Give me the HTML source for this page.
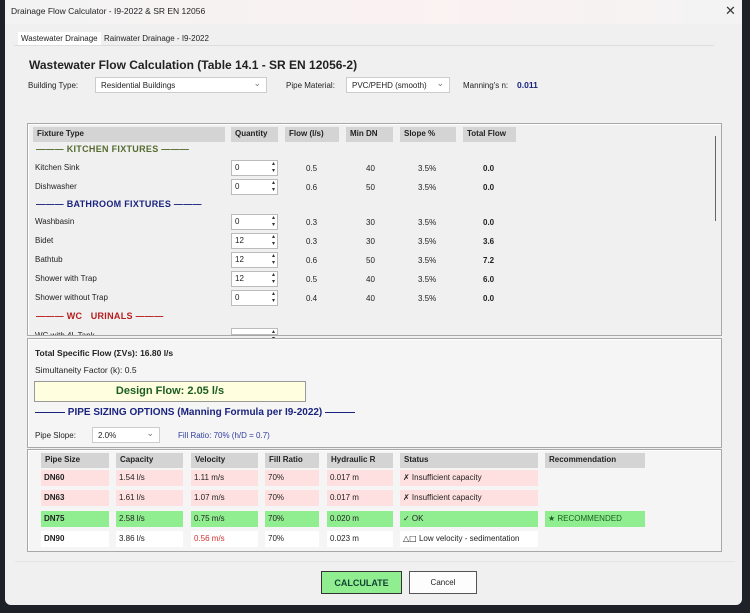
<!DOCTYPE html>
<html><head><meta charset="utf-8"><style>
*{box-sizing:border-box;margin:0;padding:0}
body{width:750px;height:613px;background:#1e2228;position:relative;overflow:hidden;font-family:"Liberation Sans",sans-serif;font-size:8.5px;color:#222}
.a{position:absolute;white-space:nowrap}
#dlg{position:absolute;left:5px;top:0;width:737px;height:605px;background:#f0f0f0;border-radius:0 0 6px 6px;overflow:hidden}
.title{left:0;top:0;width:737px;height:24px;background:linear-gradient(90deg,#f3f3f3,#fbf2f2 60%,#f3f3f3)}
.panel{position:absolute;border:1px solid #a8a8a8;box-shadow:inset 1px 1px 0 #fff}
.hc{position:absolute;background:#d4d4d4;font-weight:bold;height:15px;padding:2px 4px;font-size:8px}
.spin{position:absolute;width:47px;height:16px;background:#fff;border:1px solid #bbb;font-size:8px;padding:2px 3px}
.spin:after{content:"▴\A▾";white-space:pre;position:absolute;right:2px;top:0;font-size:6px;line-height:7px;color:#333}
.combo{position:absolute;background:#fff;border:1px solid #ccc;height:16px;padding:3px 5px;font-size:8px}
.combo:after{content:"⌄";position:absolute;right:5px;top:0;color:#777;font-size:9px}
.sec{position:absolute;font-weight:bold;font-size:9px;letter-spacing:.3px}
.c{position:absolute;height:16px;padding:3px 3px;font-size:8px}
.pk{background:#ffe0e0}.gr{background:#90ee90}.wh{background:#fff}
</style></head><body>
<div id="dlg">
<div class="a title"></div>
<div class="a" style="left:6px;top:6px;font-size:8.5px">Drainage Flow Calculator - I9-2022 &amp; SR EN 12056</div>
<div class="a" style="left:720px;top:3px;font-size:13px;color:#333">✕</div>
<div class="a" style="left:13px;top:32px;height:14px;background:#fff;padding:2px 3px;font-size:8px">Wastewater Drainage</div>
<div class="a" style="left:99px;top:34px;font-size:8px">Rainwater Drainage - I9-2022</div>
<div class="a" style="left:9px;top:45px;width:700px;border-top:1px solid #ddd"></div>
<div class="a" style="left:24px;top:58px;font-weight:bold;font-size:12px">Wastewater Flow Calculation (Table 14.1 - SR EN 12056-2)</div>
<div class="a" style="left:23px;top:81px;font-size:8px">Building Type:</div>
<div class="combo" style="left:90px;top:77px;width:172px">Residential Buildings</div>
<div class="a" style="left:281px;top:81px;font-size:8px">Pipe Material:</div>
<div class="combo" style="left:341px;top:77px;width:104px">PVC/PEHD (smooth)</div>
<div class="a" style="left:458px;top:81px;font-size:8px">Manning's n:</div>
<div class="a" style="left:512px;top:80px;font-weight:bold;color:#1a237e;font-size:8.5px">0.011</div>

<div class="panel" style="left:22px;top:123px;width:695px;height:213px;overflow:hidden">
 <div class="hc" style="left:5px;top:3px;width:192px">Fixture Type</div>
 <div class="hc" style="left:203px;top:3px;width:47px">Quantity</div>
 <div class="hc" style="left:257px;top:3px;width:54px">Flow (l/s)</div>
 <div class="hc" style="left:318px;top:3px;width:47px">Min DN</div>
 <div class="hc" style="left:372px;top:3px;width:56px">Slope %</div>
 <div class="hc" style="left:435px;top:3px;width:53px">Total Flow</div>
 <div class="a" style="left:687px;top:12px;width:1px;height:85px;background:#666"></div>
 <div class="sec" style="left:8px;top:20px;color:#556b2f">——— KITCHEN FIXTURES ———</div>
 <div class="sec" style="left:8px;top:75px;color:#1a237e">——— BATHROOM FIXTURES ———</div>
 <div class="sec" style="left:8px;top:187px;color:#b71c1c">——— WC &nbsp; URINALS ———</div>
</div>
<div id="rows"></div>

<div class="panel" style="left:22px;top:338px;width:695px;height:110px;background:#f5f5f5">
 <div class="a" style="left:7px;top:9px;font-weight:bold;font-size:8.5px">Total Specific Flow (ΣVs): 16.80 l/s</div>
 <div class="a" style="left:7px;top:26px;font-size:8.5px">Simultaneity Factor (k): 0.5</div>
 <div class="a" style="left:6px;top:42px;width:272px;height:21px;background:#ffffe0;border:1px solid #999;text-align:center;font-weight:bold;color:#1b5e20;font-size:11px;padding-top:3px">Design Flow: 2.05 l/s</div>
 <div class="sec" style="left:7px;top:68px;color:#1a237e;font-size:10px;letter-spacing:0">——— PIPE SIZING OPTIONS (Manning Formula per I9-2022) ———</div>
 <div class="a" style="left:7px;top:92px;font-size:8px">Pipe Slope:</div>
 <div class="combo" style="left:64px;top:88px;width:68px">2.0%</div>
 <div class="a" style="left:150px;top:92px;font-size:8px;color:#303f9f">Fill Ratio: 70% (h/D = 0.7)</div>
</div>

<div class="panel" style="left:22px;top:449px;width:695px;height:103px;background:#f5f5f5;overflow:hidden">
 <div class="hc" style="left:13px;top:3px;width:68px">Pipe Size</div>
 <div class="hc" style="left:88px;top:3px;width:67px">Capacity</div>
 <div class="hc" style="left:163px;top:3px;width:67px">Velocity</div>
 <div class="hc" style="left:237px;top:3px;width:54px">Fill Ratio</div>
 <div class="hc" style="left:299px;top:3px;width:66px">Hydraulic R</div>
 <div class="hc" style="left:372px;top:3px;width:138px">Status</div>
 <div class="hc" style="left:517px;top:3px;width:100px">Recommendation</div>
 <div id="res"></div>
</div>
<div class="a" style="left:10px;top:561px;width:720px;border-top:1px solid #e4e4e4"></div>
<div class="a" style="left:316px;top:571px;width:81px;height:23px;background:#90ee90;border:1px solid #333;text-align:center;font-weight:bold;font-size:9px;padding-top:6px;color:#143">CALCULATE</div>
<div class="a" style="left:404px;top:571px;width:68px;height:23px;background:#fdfdfd;border:1px solid #555;text-align:center;font-size:8px;padding-top:6px">Cancel</div>
</div>
<script>
var r=[["Kitchen Sink",168,"0","0.5","40","0.0"],["Dishwasher",187,"0","0.6","50","0.0"],["Washbasin",222,"0","0.3","30","0.0"],["Bidet",241,"12","0.3","30","3.6"],["Bathtub",260,"12","0.6","50","7.2"],["Shower with Trap",279,"12","0.5","40","6.0"],["Shower without Trap",298,"0","0.4","40","0.0"]];
var h="";r.forEach(function(x){var y=x[1];h+='<div class="a" style="left:30px;top:'+(y-5)+'px;font-size:8px">'+x[0]+'</div><div class="spin" style="left:226px;top:'+(y-8)+'px">'+x[2]+'</div><div class="a" style="left:301px;top:'+(y-4)+'px;font-size:8px">'+x[3]+'</div><div class="a" style="left:361px;top:'+(y-4)+'px;font-size:8px">'+x[4]+'</div><div class="a" style="left:413px;top:'+(y-4)+'px;font-size:8px">3.5%</div><div class="a" style="left:478px;top:'+(y-4)+'px;font-size:8px;font-weight:bold">'+x[5]+'</div>';});
h+='<div class="a" style="left:30px;top:331px;font-size:8px;height:4px;overflow:hidden">WC with 4L Tank</div><div class="spin" style="left:226px;top:328px;height:7px"></div>';
document.getElementById("rows").innerHTML=h;
var s=[["DN60","1.54 l/s","1.11 m/s","0.017 m","✗ Insufficient capacity","","pk",20],["DN63","1.61 l/s","1.07 m/s","0.017 m","✗ Insufficient capacity","","pk",40],["DN75","2.58 l/s","0.75 m/s","0.020 m","✓ OK","★ RECOMMENDED","gr",61],["DN90","3.86 l/s","0.56 m/s","0.023 m","<span style=\"font-family:'DejaVu Sans'\">&#9651;&#9633;</span> Low velocity - sedimentation","","wh",81]];
var g="",L=[[13,68],[88,67],[163,67],[237,54],[299,66],[372,138]];
s.forEach(function(x){var v=[x[0],x[1],x[2],"70%",x[3],x[4]];v.forEach(function(t,i){var st=i==0?"font-weight:bold;":"";if(i==2&&x[0]=="DN90")st+="color:#d32f2f;";g+='<div class="c '+x[6]+'" style="left:'+L[i][0]+'px;top:'+x[7]+'px;width:'+L[i][1]+'px;'+st+'">'+t+'</div>';});if(x[5])g+='<div class="c gr" style="left:517px;top:'+x[7]+'px;width:100px;color:#1b5e20">'+x[5]+'</div>';});
document.getElementById("res").innerHTML=g;
</script>
</body></html>
